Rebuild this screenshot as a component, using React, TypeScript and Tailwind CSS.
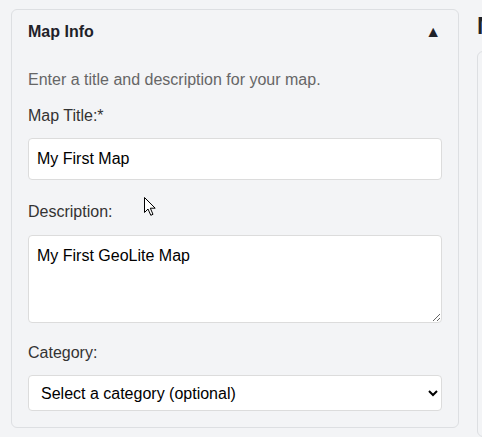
import React from "react";

export default function App() {
  const font = { fontFamily: '"Liberation Sans", Arial, sans-serif' };
  return (
    <div
      className="relative w-[482px] h-[437px] overflow-hidden bg-[#f3f4f6] pt-[9px] pl-[11px] flex gap-[18px]"
      style={font}
    >
      {/* Left card */}
      <div className="w-[448px] shrink-0 h-[419px] rounded-[6px] border border-[#dddfe2] bg-[#f3f4f6] flex flex-col">
        <div className="h-[44px] flex items-center justify-between px-4">
          <span className="text-[16px] font-bold text-[#1f2229]">Map Info</span>
          <span className="text-[16px] leading-none text-[#1f2229] mr-[1px]">▲</span>
        </div>
        <div className="px-4 pt-[14px] pb-4 flex flex-col">
          <p className="text-[16px] leading-6 text-[#666666] mb-[12px]">
            Enter a title and description for your map.
          </p>
          <label className="block text-[16px] leading-6 text-[#333333] mb-[10px]">Map Title:*</label>
          <input
            type="text"
            defaultValue="My First Map"
            className="block w-full h-[42px] rounded-[4px] border border-[#dcdcdc] bg-white px-2 text-[16px] text-black mb-[20px] outline-none"
            style={font}
          />
          <label className="block text-[16px] leading-6 text-[#333333] mb-[11px]">Description:</label>
          <textarea
            defaultValue="My First GeoLite Map"
            className="block w-full h-[88px] rounded-[4px] border border-[#dcdcdc] bg-white px-2 pt-[8px] text-[16px] text-black mb-[18px] outline-none"
            style={font}
          />
          <label className="block text-[16px] leading-6 text-[#333333] mb-[10px]">Category:</label>
          <select
            className="block w-full h-[36px] rounded-[4px] border border-[#dcdcdc] bg-white px-2 text-[16px] text-black outline-none"
            style={{ ...font, appearance: "auto" }}
            defaultValue=""
          >
            <option value="">Select a category (optional)</option>
            <option value="a">Nature</option>
          </select>
        </div>
      </div>

      {/* Right column (cut off) */}
      <div className="shrink-0 w-[300px] flex flex-col">
        <h2 className="text-[24px] leading-8 font-bold text-[#1f2229] mt-[1px] mb-[9px]">Map Preview</h2>
        <div className="h-[400px] rounded-[6px] border border-[#dddfe2] bg-[#f3f4f6]" />
      </div>

      {/* mouse cursor */}
      <svg
        className="absolute left-[144px] top-[197px]"
        width="14"
        height="20"
        viewBox="0 0 14 20"
      >
        <path
          d="M0.5 0.5 L0.5 15.5 L4 12 L6.8 18.3 L9 17.3 L6.3 11.2 L11.2 11.2 Z"
          fill="white"
          stroke="black"
          strokeWidth="1"
          strokeLinejoin="miter"
        />
      </svg>
    </div>
  );
}
